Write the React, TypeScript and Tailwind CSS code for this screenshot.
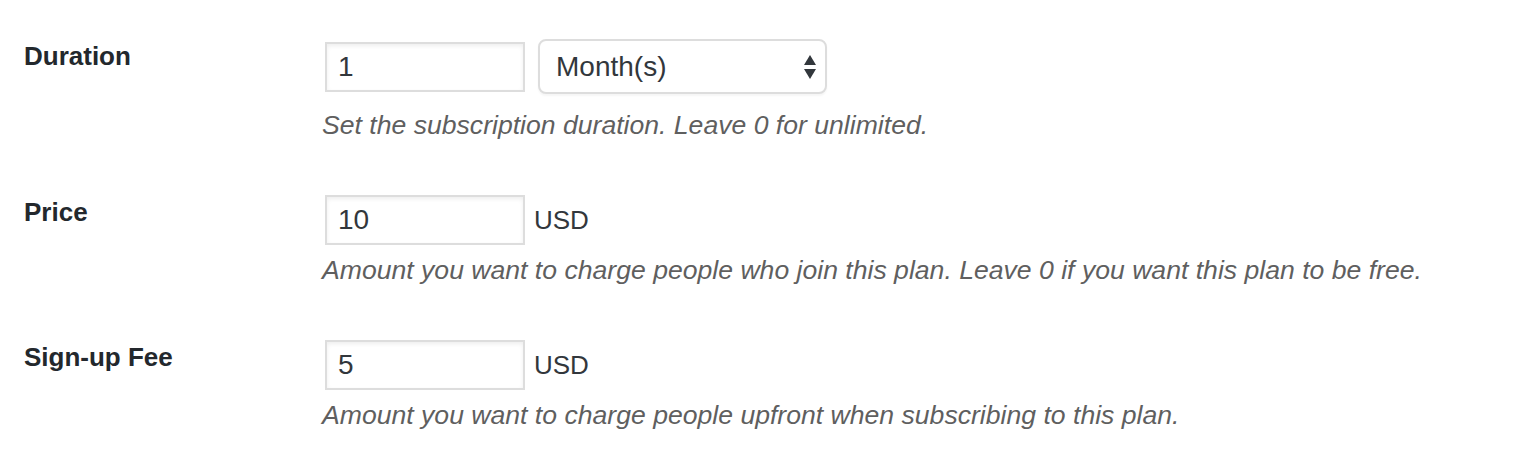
import React from "react";

const font = { fontFamily: '"Liberation Sans", Arial, Helvetica, sans-serif' };

function Label({ children }: { children: React.ReactNode }) {
  return (
    <div className="text-[26px] font-bold leading-[34px] text-[#23282d]">{children}</div>
  );
}

function TextInput({ value }: { value: string }) {
  return (
    <div className="ml-[3px] h-[50px] w-[200px] border-2 border-[#dddddd] bg-white pl-[11px] text-[28px] leading-[46px] text-[#32373c] shadow-[inset_0_2px_4px_rgba(0,0,0,0.07)]">
      {value}
    </div>
  );
}

function Desc({ children, className = "" }: { children: React.ReactNode; className?: string }) {
  return (
    <p className={`text-[26.6px] italic leading-[39px] text-[#5f5f5f] ${className}`}>{children}</p>
  );
}

export default function App() {
  return (
    <div style={font} className="w-[1520px] h-[460px] bg-white pl-[24px] pt-[39px]">
      <div className="grid grid-cols-[298px_1fr] gap-y-[50px]">
        {/* Duration */}
        <Label>Duration</Label>
        <div>
          <div className="flex items-center gap-[13px]">
            <TextInput value="1" />
            <div className="flex h-[55px] w-[289px] items-center justify-between rounded-[8px] border-2 border-[#dddddd] bg-white pl-[16px] pr-[9px] text-[28px] text-[#32373c] shadow-[0_2px_2px_rgba(0,0,0,0.04)]">
              <span>Month(s)</span>
              <svg width="12" height="26" viewBox="0 0 12 26" aria-hidden="true">
                <polygon points="6,1 12,11 0,11" fill="#32373c" />
                <polygon points="0,15 12,15 6,25" fill="#32373c" />
              </svg>
            </div>
          </div>
          <Desc className="mt-[12px]">Set the subscription duration. Leave 0 for unlimited.</Desc>
        </div>

        {/* Price */}
        <Label>Price</Label>
        <div>
          <div className="flex items-center gap-[9px]">
            <TextInput value="10" />
            <span className="text-[26px] text-[#32373c]">USD</span>
          </div>
          <Desc className="mt-[6px]">
            Amount you want to charge people who join this plan. Leave 0 if you want this plan to be free.
          </Desc>
        </div>

        {/* Sign-up Fee */}
        <Label>Sign-up Fee</Label>
        <div>
          <div className="flex items-center gap-[9px]">
            <TextInput value="5" />
            <span className="text-[26px] text-[#32373c]">USD</span>
          </div>
          <Desc className="mt-[6px]">
            Amount you want to charge people upfront when subscribing to this plan.
          </Desc>
        </div>
      </div>
    </div>
  );
}
